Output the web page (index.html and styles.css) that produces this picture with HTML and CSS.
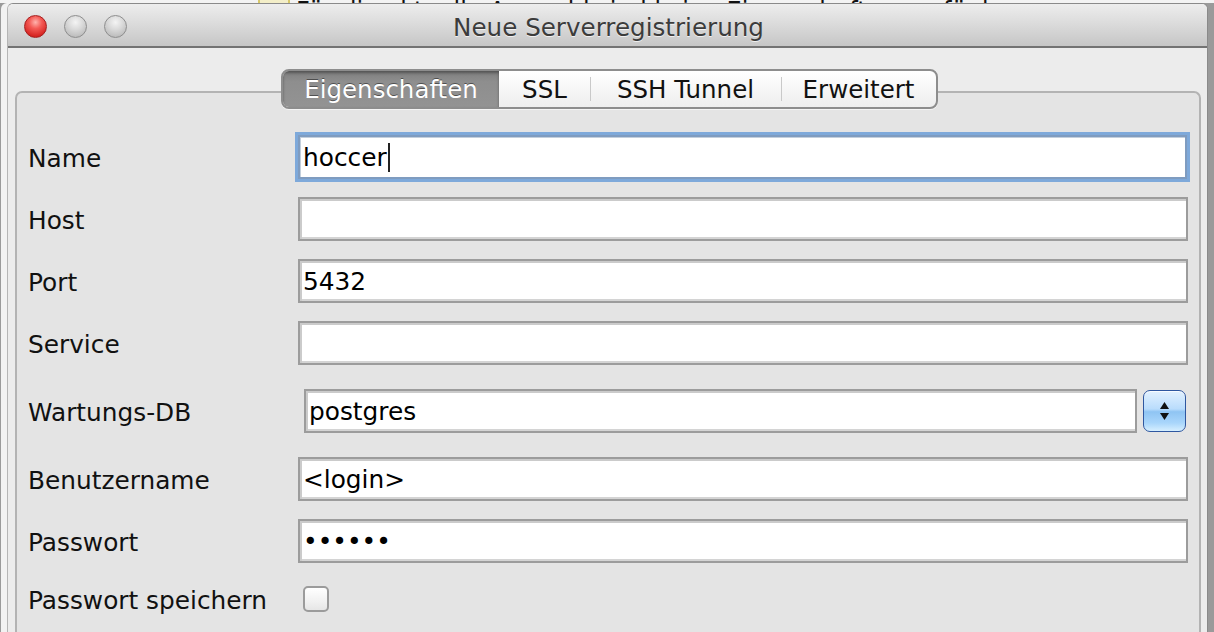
FILE: index.html
```html
<!DOCTYPE html>
<html lang="de">
<head>
<meta charset="utf-8">
<title>Neue Serverregistrierung</title>
<link rel="stylesheet" href="styles.css">
</head>
<body>
<div class="behind">
  <div class="behind-line">
    <span class="behind-icon"></span>
    <span class="behind-text">Für die aktuelle Auswahl sind keine Eigenschaften verfügbar</span>
  </div>
</div>
<div class="window">
  <div class="titlebar">
    <div class="lights">
      <span class="light red"></span>
      <span class="light gray"></span>
      <span class="light gray"></span>
    </div>
    <div class="title">Neue Serverregistrierung</div>
  </div>
  <div class="content">
    <div class="tabs">
      <div class="tab selected t1">Eigenschaften</div>
      <div class="tab t2">SSL</div>
      <div class="tab t3">SSH Tunnel</div>
      <div class="tab t4">Erweitert</div>
    </div>
    <div class="groupbox">
      <div class="form">
        <div class="label">Name</div>
        <div class="field focused"><span class="caret">hoccer</span></div>

        <div class="label">Host</div>
        <div class="field"></div>

        <div class="label">Port</div>
        <div class="field">5432</div>

        <div class="label">Service</div>
        <div class="field"></div>

        <div class="label">Wartungs-DB</div>
        <div class="combo">
          <div class="field combo-field">postgres</div>
          <div class="stepper">
            <svg width="43" height="42" viewBox="0 0 43 42">
              <path d="M21.5 12 L26 19 L17 19 Z" fill="#111"/>
              <path d="M21.5 30 L26 23 L17 23 Z" fill="#111"/>
            </svg>
          </div>
        </div>

        <div class="label">Benutzername</div>
        <div class="field">&lt;login&gt;</div>

        <div class="label">Passwort</div>
        <div class="field dots">••••••</div>

        <div class="label">Passwort speichern</div>
        <div class="check-cell"><span class="checkbox"></span></div>
      </div>
    </div>
  </div>
</div>
</body>
</html>
```
FILE: styles.css
```css
html, body {
  margin: 0;
  padding: 0;
}
body {
  width: 1214px;
  height: 632px;
  overflow: hidden;
  background: #9a9a9a;
  font-family: "DejaVu Sans", Verdana, sans-serif;
}
.behind {
  height: 3px;
  overflow: hidden;
  background: #f3f3f3;
}
.behind-line {
  display: flex;
  align-items: flex-end;
  height: 3px;
  padding-left: 258px;
  gap: 6px;
}
.behind-icon {
  flex: none;
  width: 28px;
  height: 22px;
  border: 2px solid #d8c96a;
  background: #f3eec8;
  margin-bottom: -16px;
}
.behind-text {
  font-size: 24px;
  line-height: 24px;
  color: #111;
  margin-bottom: -20px;
  white-space: nowrap;
}
.window {
  margin-left: 7px;
  width: 1199px;
  height: 629px;
  border: 1px solid #8a8a8a;
  border-left-color: #b5b5b5;
  border-bottom: none;
  border-radius: 6px 6px 0 0;
  background: #ececec;
  overflow: hidden;
  box-shadow: -6px 0 0 #f2f2f2;
}
.titlebar {
  position: relative;
  height: 42px;
  border-bottom: 2px solid #737373;
  background: linear-gradient(#ededed, #dadada 50%, #c6c6c6);
  display: flex;
  align-items: center;
  justify-content: center;
}
.lights {
  position: absolute;
  left: 16px;
  top: 11px;
  display: flex;
  gap: 17px;
}
.light {
  width: 21px;
  height: 21px;
  border-radius: 50%;
  display: block;
}
.light.red {
  border: 1px solid #a51f1f;
  background: radial-gradient(circle at 50% 30%, #ffb3ad 0, #f45a55 35%, #d3201d 80%, #b71614 100%);
}
.light.gray {
  border: 1px solid #8e8e8e;
  background: radial-gradient(circle at 50% 30%, #f4f4f4 0, #dadada 40%, #b9b9b9 85%, #a9a9a9 100%);
}
.title {
  font-size: 24.6px;
  color: #3c3c3c;
  text-shadow: 0 1px 0 rgba(255,255,255,0.7);
  margin-left: 2px;
  margin-top: 4px;
}
.content {
  padding: 21px 6px 0 6px;
  display: flex;
  flex-direction: column;
  align-items: stretch;
}
.tabs {
  position: relative;
  z-index: 1;
  align-self: flex-start;
  margin-left: 267px;
  display: flex;
  height: 36px;
  border: 2px solid #8d8d8d;
  border-radius: 8px;
  background: linear-gradient(#ffffff, #f6f6f6 50%, #eeeeee);
  overflow: hidden;
  box-shadow: 0 1px 0 rgba(255,255,255,0.6);
}
.tab {
  box-sizing: border-box;
  display: flex;
  align-items: center;
  justify-content: center;
  font-size: 24.5px;
  color: #111;
  position: relative;
  padding-top: 1px;
}
.t1 { width: 216px; }
.t2 { width: 91px; }
.t3 { width: 191px; }
.t4 { width: 155px; }
.tab + .tab::before {
  content: "";
  position: absolute;
  left: 0;
  top: 6px;
  bottom: 6px;
  width: 1px;
  background: #c9c9c9;
}
.tab.selected + .tab::before {
  display: none;
}
.tab.selected {
  background: linear-gradient(#7e7e7e, #8e8e8e 30%, #939393);
  color: #fff;
  text-shadow: 0 -1px 0 rgba(0,0,0,0.45);
  box-shadow: inset 0 2px 3px rgba(0,0,0,0.35);
}
.groupbox {
  margin-top: -18px;
  margin-left: 1px;
  height: 560px;
  border: 2px solid #b3b3b3;
  border-bottom: none;
  border-radius: 7px 7px 0 0;
  background: #e4e4e4;
  padding: 42px 11px 0 11px;
}
.form {
  display: grid;
  grid-template-columns: 270px 1fr;
  grid-template-rows: 44px 44px 44px 44px 56px 44px 44px 36px;
  row-gap: 18px;
  align-items: center;
}
.label {
  font-size: 24.8px;
  color: #111;
  display: flex;
  align-items: center;
  height: 100%;
  padding-top: 3px;
  box-sizing: border-box;
  white-space: nowrap;
}
.field {
  box-sizing: border-box;
  height: 44px;
  border: 2px solid #9c9c9c;
  box-shadow: inset 2px 2px 0 #cbcbcb, inset 0 -2px 0 #d4d4d4;
  background: #fff;
  font-size: 24.8px;
  color: #000;
  padding: 0 3px;
  display: flex;
  align-items: center;
  white-space: nowrap;
}
.field.focused {
  border-color: #7f9cc0;
  box-shadow: 0 0 0 3px #7ea9da, inset 1px 1px 0 #c3cfdc;
  margin: 0 1px 0 0;
}
.caret {
  border-right: 2px solid #222;
  padding-right: 1px;
}
.combo {
  display: flex;
  align-items: center;
  gap: 6px;
  padding-left: 6px;
  padding-right: 2px;
}
.combo-field {
  flex: 1;
}
.stepper {
  flex: none;
  box-sizing: border-box;
  width: 43px;
  height: 42px;
  border: 1px solid #2f57a0;
  border-radius: 7px;
  background: linear-gradient(#e2f1ff 0, #b9dcfc 45%, #8fc4f3 52%, #a9d6fb 80%, #d6efff 100%);
  box-shadow: inset 0 1px 0 rgba(255,255,255,0.8);
  display: flex;
  align-items: center;
  justify-content: center;
  overflow: hidden;
}
.stepper svg {
  display: block;
  flex: none;
}
.check-cell {
  display: flex;
  align-items: center;
  height: 100%;
  padding-left: 5px;
}
.checkbox {
  display: block;
  box-sizing: border-box;
  width: 26px;
  height: 26px;
  border: 2px solid #9b9b9b;
  border-radius: 5px;
  background: linear-gradient(#ffffff, #f1f1f1 60%, #e6e6e6);
}
```
